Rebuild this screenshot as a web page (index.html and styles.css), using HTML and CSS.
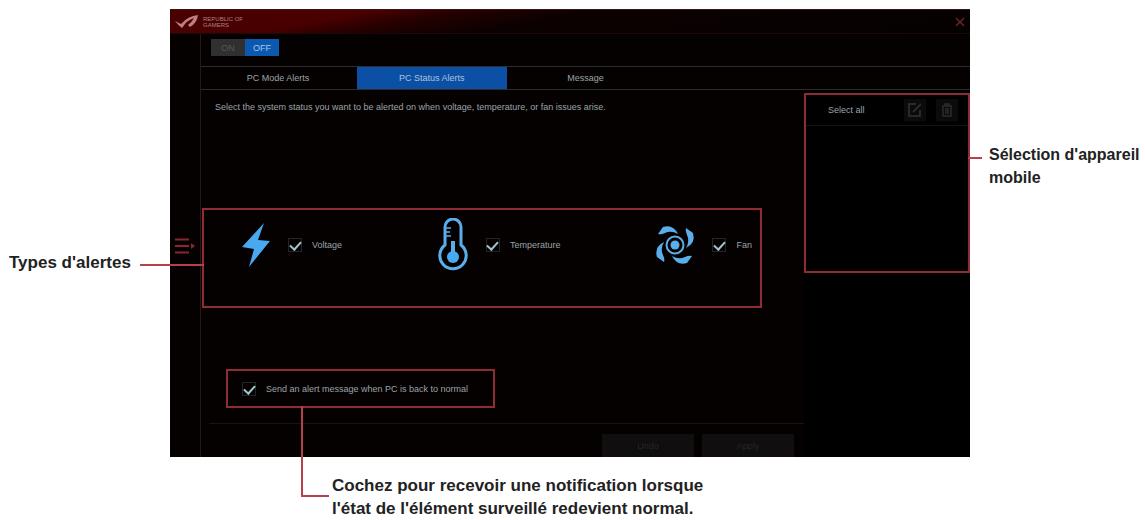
FILE: index.html
```html
<!DOCTYPE html>
<html lang="fr">
<head>
    <meta charset="UTF-8">
    <meta name="viewport" content="width=device-width, initial-scale=1.0">
    <title>PC Status Alerts</title>
    <link rel="stylesheet" href="styles.css">
</head>
<body>
    <div class="figure">
        <p class="note note-left">Types d'alertes</p>

        <div class="app" lang="en">
            <!-- Title bar -->
            <header class="titlebar">
                <svg class="logo" viewBox="0 0 24 14" aria-hidden="true">
                    <path d="M0 6 L6 9 Q13 1 23 0 Q22 8 15 12 L13 10 Q17 7 19 3 Q12 5 7 13 Q3 10 0 6Z" fill="#c08080"/>
                </svg>
                <span class="brand">REPUBLIC OF<br>GAMERS</span>
                <button class="close" aria-label="Close">
                    <svg viewBox="0 0 10 10"><path d="M1 1 L9 9 M9 1 L1 9" stroke="#6b2424" stroke-width="1.5"/></svg>
                </button>
            </header>

            <div class="workspace">
                <nav class="sidebar">
                    <button class="menu" aria-label="Menu">
                        <svg viewBox="0 0 20 16"><path d="M0 1.5H14M0 8H14M0 14.5H14" stroke="#8c2630" stroke-width="2"/><path d="M16 5L20 8L16 11Z" fill="#8c2630"/></svg>
                    </button>
                </nav>

                <main class="main">
                    <div class="toggle-row">
                        <button class="toggle">ON</button><button class="toggle toggle-active">OFF</button>
                    </div>

                    <div class="tabs">
                        <button class="tab">PC Mode Alerts</button>
                        <button class="tab tab-active">PC Status Alerts</button>
                        <button class="tab">Message</button>
                    </div>

                    <div class="columns">
                        <section class="content">
                            <p class="intro">Select the system status you want to be alerted on when voltage, temperature, or fan issues arise.</p>

                            <div class="alerts marked">
                                <div class="alert">
                                    <svg class="bolt" viewBox="0 0 28 44" aria-hidden="true">
                                        <path d="M22 0 L0 24 L12 26 L7 44 L28 18 L16 17Z" fill="#48a8f0"/>
                                    </svg>
                                    <input type="checkbox" id="voltage" checked>
                                    <label for="voltage">Voltage</label>
                                </div>
                                <div class="alert">
                                    <svg class="thermo" viewBox="0 0 30 54" fill="none" stroke="#5aaeea" aria-hidden="true">
                                        <path d="M7 27 V9 A8 8 0 0 1 23 9 V27 A13.2 13.2 0 1 1 7 27Z" stroke-width="3"/>
                                        <path d="M8 10H13M8 14H12M8 18H13" stroke-width="1.5"/>
                                        <path d="M15 23V38" stroke-width="4"/>
                                        <circle cx="15" cy="39" r="6" fill="#48a8f0" stroke="none"/>
                                    </svg>
                                    <input type="checkbox" id="temperature" checked>
                                    <label for="temperature">Temperature</label>
                                </div>
                                <div class="alert">
                                    <svg class="fan" viewBox="0 0 38 40" fill="#5aaeea" aria-hidden="true">
                                        <path id="blade" d="M2 9 L7 2 Q17 -1 22 9 Q15 5 9 8 Q5 10 2 9Z"/>
                                        <use href="#blade" transform="rotate(90 19 20)"/>
                                        <use href="#blade" transform="rotate(180 19 20)"/>
                                        <use href="#blade" transform="rotate(270 19 20)"/>
                                        <circle cx="19" cy="20" r="8.5" fill="none" stroke="#5aaeea" stroke-width="2"/>
                                        <circle cx="19" cy="20" r="4.5"/>
                                    </svg>
                                    <input type="checkbox" id="fan" checked>
                                    <label for="fan">Fan</label>
                                </div>
                            </div>

                            <div class="back-normal marked">
                                <input type="checkbox" id="normal" checked>
                                <label for="normal">Send an alert message when PC is back to normal</label>
                            </div>

                            <div class="actions">
                                <button class="action">Undo</button>
                                <button class="action">Apply</button>
                            </div>
                        </section>

                        <aside class="side">
                            <div class="devices marked">
                                <div class="devices-head">
                                    <span class="devices-title">Select all</span>
                                    <button class="icon-btn" aria-label="Edit">
                                        <svg viewBox="0 0 16 16" fill="none" stroke="#343434" stroke-width="1.5"><path d="M9 2H2V14H13V8M6 10L14 2"/></svg>
                                    </button>
                                    <button class="icon-btn" aria-label="Delete">
                                        <svg viewBox="0 0 16 16" fill="none" stroke="#2c2c2c" stroke-width="1.5"><path d="M3 4H13M6 4V2H10V4M4 4V14H12V4M7 6V12M9 6V12"/></svg>
                                    </button>
                                </div>
                            </div>
                        </aside>
                    </div>
                </main>
            </div>
        </div>

        <p class="note note-right">Sélection d'appareil mobile</p>
        <p class="note note-bottom">Cochez pour recevoir une notification lorsque<br>l'état de l'élément surveillé redevient normal.</p>
    </div>
</body>
</html>
```
FILE: styles.css
```css
* {
    box-sizing: border-box;
}

body {
    margin: 0;
    background-color: #fff;
    font-family: "Liberation Sans", Arial, sans-serif;
}

button {
    margin: 0;
    padding: 0;
    border: none;
    background: none;
    font-family: inherit;
    font-size: inherit;
    cursor: pointer;
}

svg {
    display: block;
}

.figure {
    display: grid;
    grid-template-columns: 170px 1fr 175px;
    padding-top: 9px;
}

/* Captions around the window */
.note {
    margin: 0;
    color: #222;
    font-size: 17px;
    font-weight: bold;
    line-height: 23px;
}

.note-left {
    padding: 242px 0 0 9px;
}

.note-right {
    padding: 134px 0 0 19px;
    font-size: 16px;
}

.note-bottom {
    grid-column: 2 / 4;
    padding: 17px 0 0 162px;
}

/* Application window */
.app {
    display: flex;
    flex-direction: column;
    min-height: 448px;
    background-color: #050101;
    color: #9aa4a8;
    font-size: 9px;
}

.titlebar {
    display: flex;
    align-items: center;
    height: 25px;
    padding: 0 5px;
    gap: 4px;
    border-top: 1px solid #3a1518;
    border-bottom: 1px solid #1c0808;
    background: linear-gradient(170deg, #480000 0%, #480000 23%, #260000 32%, #0c0101 46%, #050101 100%);
}

.logo {
    width: 24px;
    height: 14px;
}

.brand {
    color: #b08080;
    font-size: 6px;
    line-height: 6px;
}

.close {
    margin-left: auto;
}

.close svg {
    width: 10px;
    height: 10px;
}

.workspace {
    display: flex;
    flex: 1;
}

.sidebar {
    display: flex;
    align-items: center;
    justify-content: center;
    width: 31px;
    border-right: 1px solid #2b1517;
}

.menu svg {
    width: 20px;
    height: 16px;
}

.main {
    display: flex;
    flex: 1;
    flex-direction: column;
}

.toggle-row {
    display: flex;
    padding: 5px 10px 10px;
}

.toggle {
    width: 34px;
    height: 17px;
    background-color: #303030;
    color: #575757;
}

.toggle-active {
    background-color: #0a58b0;
    color: #a8c8e8;
}

.tabs {
    display: grid;
    grid-template-columns: repeat(3, 20%);
    height: 24px;
    border-top: 1px solid #2c2c2e;
    border-bottom: 1px solid #2c2c2e;
}

.tab {
    color: #9aa4a8;
}

.tab-active {
    margin: 0 2px;
    background-color: #0b50a4;
    color: #a8c4dc;
}

.columns {
    display: flex;
    flex: 1;
}

.content {
    display: flex;
    flex: 1;
    flex-direction: column;
}

.intro {
    margin: 0;
    padding: 9px 14px 0;
    line-height: 16px;
}

/* Red frames with their leader lines */
.marked {
    position: relative;
    border: 2px solid #8f2c34;
}

.marked::after {
    content: "";
    position: absolute;
    border: 0 solid #b8404a;
}

.alerts {
    display: flex;
    align-items: center;
    justify-content: space-between;
    height: 100px;
    margin: 93px 42px 0 1px;
    padding: 0 8px 26px 38px;
}

.alerts::after {
    top: 54px;
    right: 100%;
    width: 64px;
    border-top-width: 2px;
}

.alert {
    display: flex;
    align-items: center;
}

.bolt {
    width: 28px;
    height: 44px;
}

.thermo {
    width: 30px;
    height: 54px;
}

.fan {
    width: 38px;
    height: 40px;
    overflow: visible;
}

input[type="checkbox"] {
    appearance: none;
    flex: none;
    width: 14px;
    height: 14px;
    margin: 0 10px 0 18px;
    border: 1px solid #20262a;
}

input[type="checkbox"]:checked::before {
    content: "";
    display: block;
    width: 5px;
    height: 9px;
    margin: 0 auto;
    border: solid #a4c4cc;
    border-width: 0 2px 2px 0;
    transform: rotate(42deg);
}

.back-normal {
    display: flex;
    align-items: center;
    align-self: flex-start;
    height: 39px;
    margin: 61px 0 0 25px;
    padding-right: 25px;
}

.back-normal input[type="checkbox"] {
    margin: 0 10px 0 14px;
}

.back-normal::after {
    top: 100%;
    left: 73px;
    width: 26px;
    height: 89px;
    border-width: 0 0 2px 2px;
}

.actions {
    display: flex;
    justify-content: flex-end;
    gap: 8px;
    margin: auto 0 0 8px;
    padding: 10px 10px 0 0;
    border-top: 1px solid #1c1214;
}

.action {
    width: 92px;
    height: 23px;
    background-color: #100e0e;
    color: #262626;
}

.side {
    width: 166px;
    padding-top: 3px;
    background-color: #000;
}

.devices {
    height: 180px;
}

.devices::after {
    top: 62px;
    left: 100%;
    width: 14px;
    border-top-width: 2px;
}

.devices-head {
    display: flex;
    align-items: center;
    gap: 10px;
    height: 31px;
    padding: 0 10px 0 22px;
    border-bottom: 1px solid #141416;
}

.devices-title {
    margin-right: auto;
}

.icon-btn {
    padding: 3px;
    background-color: #0b0b0c;
}

.icon-btn svg {
    width: 16px;
    height: 16px;
}
```
